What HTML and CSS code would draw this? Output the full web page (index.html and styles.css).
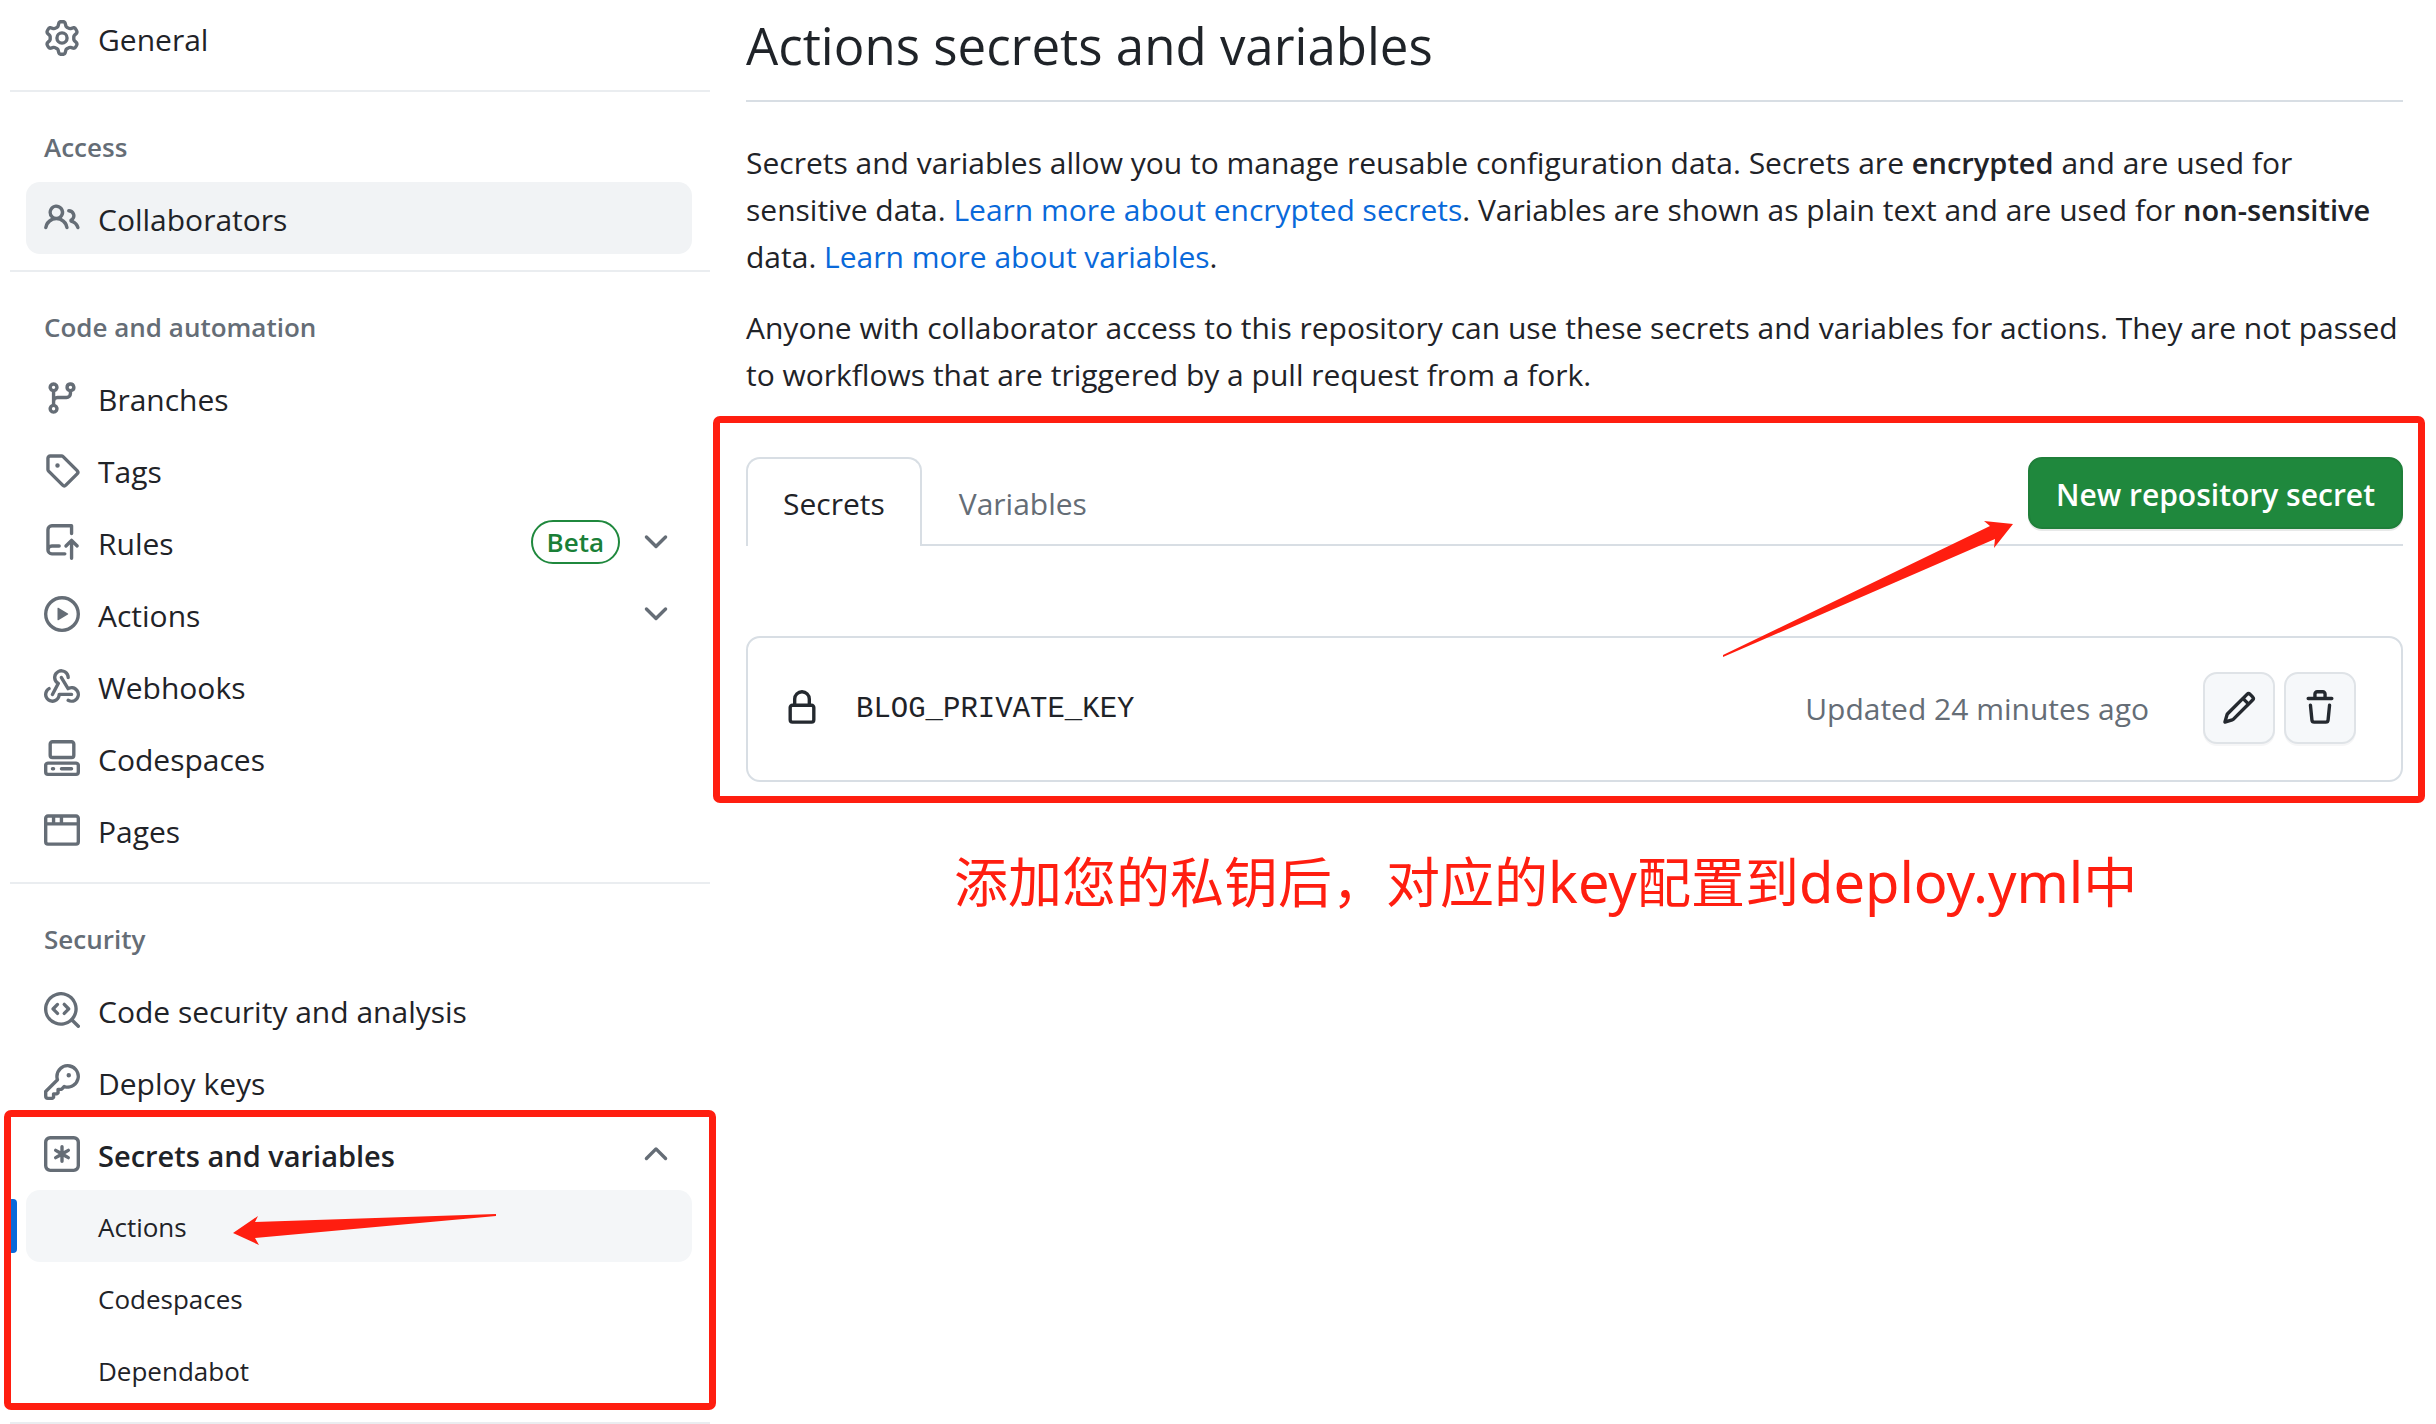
FILE: index.html
```html
<!DOCTYPE html>
<html lang="en">
<head>
  <meta charset="utf-8">
  <meta name="viewport" content="width=device-width, initial-scale=1">
  <title>Actions secrets and variables</title>
  <link rel="stylesheet" href="styles.css">
</head>
<body>
  <div class="layout">
    <nav class="sidebar" aria-label="Repository settings">
      <ul class="nav-group">
        <li><a class="nav-item" href="#general">
          <svg class="icon" viewBox="0 0 16 16" aria-hidden="true"><path d="M8 0a8.2 8.2 0 0 1 .701.031C9.444.095 9.99.645 10.16 1.29l.288 1.107c.018.066.079.158.212.224.231.114.454.243.668.386.123.082.233.09.299.071l1.103-.303c.644-.176 1.392.021 1.82.63.27.385.506.792.704 1.218.315.675.111 1.422-.364 1.891l-.814.806c-.049.048-.098.147-.088.294.016.257.016.515 0 .772-.01.147.038.246.088.294l.814.806c.475.469.679 1.216.364 1.891a7.977 7.977 0 0 1-.704 1.217c-.428.61-1.176.807-1.82.63l-1.102-.302c-.067-.019-.177-.011-.3.071a5.909 5.909 0 0 1-.668.386c-.133.066-.194.158-.211.224l-.29 1.106c-.168.646-.715 1.196-1.458 1.26a8.006 8.006 0 0 1-1.402 0c-.743-.064-1.289-.614-1.458-1.26l-.289-1.106c-.018-.066-.079-.158-.212-.224a5.738 5.738 0 0 1-.668-.386c-.123-.082-.233-.09-.299-.071l-1.103.303c-.644.176-1.392-.021-1.82-.63a8.12 8.12 0 0 1-.704-1.218c-.315-.675-.111-1.422.363-1.891l.815-.806c.05-.048.098-.147.088-.294a6.214 6.214 0 0 1 0-.772c.01-.147-.038-.246-.088-.294l-.815-.806C.635 6.045.431 5.298.746 4.623a7.92 7.92 0 0 1 .704-1.217c.428-.61 1.176-.807 1.82-.63l1.102.302c.067.019.177.011.3-.071.214-.143.437-.272.668-.386.133-.066.194-.158.211-.224l.29-1.106C6.009.645 6.556.095 7.299.03 7.53.01 7.764 0 8 0Zm-.571 1.525c-.036.003-.108.036-.137.146l-.289 1.105c-.147.561-.549.967-.998 1.189-.173.086-.34.183-.5.29-.417.278-.97.423-1.529.27l-1.103-.303c-.109-.03-.175.016-.195.045-.22.312-.412.644-.573.99-.014.031-.021.11.059.19l.815.806c.411.406.562.957.53 1.456a4.709 4.709 0 0 0 0 .582c.032.499-.119 1.05-.53 1.456l-.815.806c-.081.08-.073.159-.059.19.162.346.353.677.573.989.02.03.085.076.195.046l1.102-.303c.56-.153 1.113-.008 1.53.27.161.107.328.204.501.29.447.222.85.629.997 1.189l.289 1.105c.029.109.101.143.137.146a6.6 6.6 0 0 0 1.142 0c.036-.003.108-.036.137-.146l.289-1.105c.147-.561.549-.967.998-1.189.173-.086.34-.183.5-.29.417-.278.97-.423 1.529-.27l1.103.303c.109.029.175-.016.195-.045.22-.313.411-.644.573-.99.014-.031.021-.11-.059-.19l-.815-.806c-.411-.406-.562-.957-.53-1.456a4.709 4.709 0 0 0 0-.582c-.032-.499.119-1.05.53-1.456l.815-.806c.081-.08.073-.159.059-.19a6.464 6.464 0 0 0-.573-.989c-.02-.03-.085-.076-.195-.046l-1.102.303c-.56.153-1.113.008-1.53-.27a4.44 4.44 0 0 0-.501-.29c-.447-.222-.85-.629-.997-1.189l-.289-1.105c-.029-.11-.101-.143-.137-.146a6.6 6.6 0 0 0-1.142 0ZM11 8a3 3 0 1 1-6 0 3 3 0 0 1 6 0ZM9.5 8a1.5 1.5 0 1 0-3.001.001A1.5 1.5 0 0 0 9.5 8Z"/></svg>
          <span class="nav-label">General</span></a></li>
      </ul>

      <h2 class="nav-title">Access</h2>
      <ul class="nav-group">
        <li><a class="nav-item nav-item-hover" href="#collaborators">
          <svg class="icon" viewBox="0 0 16 16" aria-hidden="true"><path d="M2 5.5a3.5 3.5 0 1 1 5.898 2.549 5.508 5.508 0 0 1 3.034 4.084.75.75 0 1 1-1.482.235 4 4 0 0 0-7.9 0 .75.75 0 0 1-1.482-.236A5.507 5.507 0 0 1 3.102 8.05 3.493 3.493 0 0 1 2 5.5ZM11 4a3.001 3.001 0 0 1 2.22 5.018 5.01 5.01 0 0 1 2.56 3.012.749.749 0 0 1-.885.954.752.752 0 0 1-.549-.514 3.507 3.507 0 0 0-2.522-2.372.75.75 0 0 1-.574-.73v-.352a.75.75 0 0 1 .416-.672A1.5 1.5 0 0 0 11 5.5.75.75 0 0 1 11 4Zm-5.5-.5a2 2 0 1 0-.001 3.999A2 2 0 0 0 5.5 3.5Z"/></svg>
          <span class="nav-label">Collaborators</span></a></li>
      </ul>

      <h2 class="nav-title">Code and automation</h2>
      <ul class="nav-group">
        <li><a class="nav-item" href="#branches">
          <svg class="icon" viewBox="0 0 16 16" aria-hidden="true"><path d="M9.5 3.25a2.25 2.25 0 1 1 3 2.122V6A2.5 2.5 0 0 1 10 8.5H6a1 1 0 0 0-1 1v1.128a2.251 2.251 0 1 1-1.5 0V5.372a2.25 2.25 0 1 1 1.5 0v1.836A2.493 2.493 0 0 1 6 7h4a1 1 0 0 0 1-1v-.628A2.25 2.25 0 0 1 9.5 3.25Zm-6 0a.75.75 0 1 0 1.5 0 .75.75 0 0 0-1.5 0Zm8.25-.75a.75.75 0 1 0 0 1.5.75.75 0 0 0 0-1.5ZM4.25 12a.75.75 0 1 0 0 1.5.75.75 0 0 0 0-1.5Z"/></svg>
          <span class="nav-label">Branches</span></a></li>
        <li><a class="nav-item" href="#tags">
          <svg class="icon" viewBox="0 0 16 16" aria-hidden="true"><path d="M1 7.775V2.75C1 1.784 1.784 1 2.75 1h5.025c.464 0 .91.184 1.238.513l6.25 6.25a1.75 1.75 0 0 1 0 2.474l-5.026 5.026a1.75 1.75 0 0 1-2.474 0l-6.25-6.25A1.752 1.752 0 0 1 1 7.775Zm1.5 0c0 .066.026.13.073.177l6.25 6.25a.25.25 0 0 0 .354 0l5.025-5.025a.25.25 0 0 0 0-.354l-6.25-6.25a.25.25 0 0 0-.177-.073H2.75a.25.25 0 0 0-.25.25ZM6 5a1 1 0 1 1 0 2 1 1 0 0 1 0-2Z"/></svg>
          <span class="nav-label">Tags</span></a></li>
        <li><button class="nav-item" type="button" aria-expanded="false">
          <svg class="icon" viewBox="0 0 16 16" aria-hidden="true"><path d="M1 2.5A2.5 2.5 0 0 1 3.5 0h8.75a.75.75 0 0 1 .75.75v3.5a.75.75 0 0 1-1.5 0V1.5h-8a1 1 0 0 0-1 1v6.708A2.493 2.493 0 0 1 3.5 9h3.25a.75.75 0 0 1 0 1.5H3.5a1 1 0 0 0 0 2h5.75a.75.75 0 0 1 0 1.5H3.5A2.5 2.5 0 0 1 1 11.5Zm13.23 7.79h-.001l-1.224-1.224v6.184a.75.75 0 0 1-1.5 0V9.066L10.28 10.29a.75.75 0 0 1-1.06-1.061l2.505-2.504a.75.75 0 0 1 1.06 0L15.29 9.23a.751.751 0 0 1-.018 1.042.751.751 0 0 1-1.042.018Z"/></svg>
          <span class="nav-label">Rules</span>
          <span class="badge">Beta</span>
          <svg class="icon" viewBox="0 0 16 16" aria-hidden="true"><path d="M12.78 5.22a.749.749 0 0 1 0 1.06l-4.25 4.25a.749.749 0 0 1-1.06 0L3.22 6.28a.749.749 0 1 1 1.06-1.06L8 8.939l3.72-3.719a.749.749 0 0 1 1.06 0Z"/></svg>
        </button></li>
        <li><button class="nav-item" type="button" aria-expanded="false">
          <svg class="icon" viewBox="0 0 16 16" aria-hidden="true"><path d="M8 0a8 8 0 1 1 0 16A8 8 0 0 1 8 0ZM1.5 8a6.5 6.5 0 1 0 13 0 6.5 6.5 0 0 0-13 0Zm4.879-2.773 4.264 2.559a.25.25 0 0 1 0 .428l-4.264 2.559A.25.25 0 0 1 6 10.559V5.442a.25.25 0 0 1 .379-.215Z"/></svg>
          <span class="nav-label">Actions</span>
          <svg class="icon" viewBox="0 0 16 16" aria-hidden="true"><path d="M12.78 5.22a.749.749 0 0 1 0 1.06l-4.25 4.25a.749.749 0 0 1-1.06 0L3.22 6.28a.749.749 0 1 1 1.06-1.06L8 8.939l3.72-3.719a.749.749 0 0 1 1.06 0Z"/></svg>
        </button></li>
        <li><a class="nav-item" href="#webhooks">
          <svg class="icon" viewBox="0 0 16 16" aria-hidden="true"><path d="M5.5 4.25a2.25 2.25 0 0 1 4.5 0 .75.75 0 0 0 1.5 0 3.75 3.75 0 1 0-6.14 2.889l-2.272 4.258a.75.75 0 0 0 1.324.706L7 7.25a.75.75 0 0 0-.309-1.015A2.25 2.25 0 0 1 5.5 4.25Z"/><path d="M7.364 3.607a.75.75 0 0 1 1.03.257l2.608 4.349a3.75 3.75 0 1 1-.628 6.785.75.75 0 0 1 .752-1.299 2.25 2.25 0 1 0-.033-3.88.75.75 0 0 1-1.03-.256L7.107 4.636a.75.75 0 0 1 .257-1.03Z"/><path d="M2.9 8.776A.75.75 0 0 1 2.625 9.8 2.25 2.25 0 1 0 6 11.75a.75.75 0 0 1 .75-.751h5.5a.75.75 0 0 1 0 1.5H7.425a3.751 3.751 0 1 1-5.55-3.998.75.75 0 0 1 1.024.274Z"/></svg>
          <span class="nav-label">Webhooks</span></a></li>
        <li><a class="nav-item" href="#codespaces">
          <svg class="icon" viewBox="0 0 16 16" aria-hidden="true"><path d="M0 11.25c0-.966.784-1.75 1.75-1.75h12.5c.966 0 1.75.784 1.75 1.75v3A1.75 1.75 0 0 1 14.25 16H1.75A1.75 1.75 0 0 1 0 14.25Zm2-9.5C2 .784 2.784 0 3.75 0h8.5C13.216 0 14 .784 14 1.75v5a1.75 1.75 0 0 1-1.75 1.75h-8.5A1.75 1.75 0 0 1 2 6.75Zm1.75-.25a.25.25 0 0 0-.25.25v5c0 .138.112.25.25.25h8.5a.25.25 0 0 0 .25-.25v-5a.25.25 0 0 0-.25-.25Zm-2 9.5a.25.25 0 0 0-.25.25v3c0 .138.112.25.25.25h12.5a.25.25 0 0 0 .25-.25v-3a.25.25 0 0 0-.25-.25Z"/><path d="M7 12.75a.75.75 0 0 1 .75-.75h4.5a.75.75 0 0 1 0 1.5h-4.5a.75.75 0 0 1-.75-.75Zm-4 0a.75.75 0 0 1 .75-.75h.5a.75.75 0 0 1 0 1.5h-.5a.75.75 0 0 1-.75-.75Z"/></svg>
          <span class="nav-label">Codespaces</span></a></li>
        <li><a class="nav-item" href="#pages">
          <svg class="icon" viewBox="0 0 16 16" aria-hidden="true"><path d="M0 2.75C0 1.784.784 1 1.75 1h12.5c.966 0 1.75.784 1.75 1.75v10.5A1.75 1.75 0 0 1 14.25 15H1.75A1.75 1.75 0 0 1 0 13.25ZM14.5 6h-13v7.25c0 .138.112.25.25.25h12.5a.25.25 0 0 0 .25-.25Zm-6-3.5v2h6V2.75a.25.25 0 0 0-.25-.25ZM5 2.5v2h2v-2Zm-3.25 0a.25.25 0 0 0-.25.25V4.5h2v-2Z"/></svg>
          <span class="nav-label">Pages</span></a></li>
      </ul>

      <h2 class="nav-title">Security</h2>
      <ul class="nav-group">
        <li><a class="nav-item" href="#code-security">
          <svg class="icon" viewBox="0 0 16 16" aria-hidden="true"><path d="M8.47 4.97a.75.75 0 0 0 0 1.06L9.94 7.5 8.47 8.97a.75.75 0 1 0 1.06 1.06l2-2a.75.75 0 0 0 0-1.06l-2-2a.75.75 0 0 0-1.06 0ZM6.53 6.03a.75.75 0 0 0-1.06-1.06l-2 2a.75.75 0 0 0 0 1.06l2 2a.75.75 0 1 0 1.06-1.06L5.06 7.5l1.47-1.47Z"/><path d="M12.246 13.307a7.501 7.501 0 1 1 1.06-1.06l2.474 2.473a.749.749 0 1 1-1.06 1.06l-2.474-2.473ZM1.5 7.5a6.002 6.002 0 0 0 3.608 5.504 6.002 6.002 0 0 0 6.486-1.117.748.748 0 0 1 .292-.293A6 6 0 1 0 1.5 7.5Z"/></svg>
          <span class="nav-label">Code security and analysis</span></a></li>
        <li><a class="nav-item" href="#deploy-keys">
          <svg class="icon" viewBox="0 0 16 16" aria-hidden="true"><path d="M10.5 0a5.499 5.499 0 1 1-1.288 10.848l-.932.932a.749.749 0 0 1-.53.22H7v.75a.749.749 0 0 1-.22.53l-.5.5a.749.749 0 0 1-.53.22H5v.75a.749.749 0 0 1-.22.53l-.5.5a.749.749 0 0 1-.53.22h-2A1.75 1.75 0 0 1 0 14.25v-2c0-.199.079-.389.22-.53l4.932-4.932A5.5 5.5 0 0 1 10.5 0Zm-4 5.5c-.001.431.069.86.205 1.269a.75.75 0 0 1-.181.768L1.5 12.56v1.69c0 .138.112.25.25.25h1.69l.06-.06v-1.19a.75.75 0 0 1 .75-.75h1.19l.06-.06v-1.19a.75.75 0 0 1 .75-.75h1.19l1.023-1.025a.75.75 0 0 1 .768-.18A4 4 0 1 0 6.5 5.5ZM11 6a1 1 0 1 1 0-2 1 1 0 0 1 0 2Z"/></svg>
          <span class="nav-label">Deploy keys</span></a></li>
        <li class="secrets-group">
          <button class="nav-item nav-item-open" type="button" aria-expanded="true">
            <svg class="icon" viewBox="0 0 16 16" aria-hidden="true"><path d="M0 2.75A2.75 2.75 0 0 1 2.75 0h10.5A2.75 2.75 0 0 1 16 2.75v10.5A2.75 2.75 0 0 1 13.25 16H2.75A2.75 2.75 0 0 1 0 13.25ZM2.75 1.5c-.69 0-1.25.56-1.25 1.25v10.5c0 .69.56 1.25 1.25 1.25h10.5c.69 0 1.25-.56 1.25-1.25V2.75c0-.69-.56-1.25-1.25-1.25Z"/><path d="M8 4a.75.75 0 0 1 .75.75V6.7l1.69-.975a.75.75 0 0 1 .75 1.3L9.5 8l1.69.976a.75.75 0 0 1-.75 1.298L8.75 9.3v1.951a.75.75 0 0 1-1.5 0V9.299l-1.69.976a.75.75 0 0 1-.75-1.3L6.5 8l-1.69-.975a.75.75 0 0 1 .75-1.3l1.69.976V4.75A.75.75 0 0 1 8 4Z"/></svg>
            <span class="nav-label">Secrets and variables</span>
            <svg class="icon" viewBox="0 0 16 16" aria-hidden="true"><path d="M3.22 10.53a.749.749 0 0 1 0-1.06l4.25-4.25a.749.749 0 0 1 1.06 0l4.25 4.25a.749.749 0 1 1-1.06 1.06L8 6.811 4.28 10.53a.749.749 0 0 1-1.06 0Z"/></svg>
          </button>
          <ul class="subnav">
            <li><a class="subnav-item subnav-item-current" href="#secrets-actions" aria-current="page">Actions</a></li>
            <li><a class="subnav-item" href="#secrets-codespaces">Codespaces</a></li>
            <li><a class="subnav-item" href="#secrets-dependabot">Dependabot</a></li>
          </ul>
          <div class="callout callout-nav"></div>
          <svg class="arrow arrow-nav" viewBox="0 0 264 32" aria-hidden="true"><path d="M0 19 25 2 22 8 263 0V2L22 24 26 31Z"/></svg>
        </li>
      </ul>
    </nav>

    <main class="content">
      <h1 class="page-title">Actions secrets and variables</h1>
      <div class="intro">
        <p>Secrets and variables allow you to manage reusable configuration data. Secrets are <strong>encrypted</strong> and are used for sensitive data. <a href="#encrypted-secrets">Learn more about encrypted secrets</a>. Variables are shown as plain text and are used for <strong>non-sensitive</strong> data. <a href="#variables-docs">Learn more about variables</a>.</p>
        <p>Anyone with collaborator access to this repository can use these secrets and variables for actions. They are not passed to workflows that are triggered by a pull request from a fork.</p>
      </div>

      <section class="secrets">
        <div class="tabs">
          <a class="tab tab-current" href="#secrets" aria-current="page">Secrets</a>
          <a class="tab" href="#variables">Variables</a>
          <button class="button-primary" type="button">New repository secret</button>
        </div>
        <div class="secret-row">
          <svg class="icon icon-dark" viewBox="0 0 16 16" aria-hidden="true"><path d="M4 4a4 4 0 0 1 8 0v2h.25c.966 0 1.75.784 1.75 1.75v5.5A1.75 1.75 0 0 1 12.25 15h-8.5A1.75 1.75 0 0 1 2 13.25v-5.5C2 6.784 2.784 6 3.75 6H4Zm8.25 3.5h-8.5a.25.25 0 0 0-.25.25v5.5c0 .138.112.25.25.25h8.5a.25.25 0 0 0 .25-.25v-5.5a.25.25 0 0 0-.25-.25ZM10.5 6V4a2.5 2.5 0 1 0-5 0v2Z"/></svg>
          <code class="secret-name">BLOG_PRIVATE_KEY</code>
          <span class="secret-date">Updated 24 minutes ago</span>
          <div class="secret-tools">
            <button class="button-icon" type="button" aria-label="Edit secret"><svg class="icon icon-dark" viewBox="0 0 16 16" aria-hidden="true"><path d="M11.013 1.427a1.75 1.75 0 0 1 2.474 0l1.086 1.086a1.75 1.75 0 0 1 0 2.474l-8.61 8.61c-.21.21-.47.364-.756.445l-3.251.93a.75.75 0 0 1-.927-.928l.929-3.25c.081-.286.235-.547.445-.758l8.61-8.61Zm.176 4.823L9.75 4.81l-6.286 6.287a.253.253 0 0 0-.064.108l-.558 1.953 1.953-.558a.253.253 0 0 0 .108-.064Zm1.238-3.763a.25.25 0 0 0-.354 0L10.811 3.75l1.439 1.44 1.263-1.263a.25.25 0 0 0 0-.354Z"/></svg></button>
            <button class="button-icon" type="button" aria-label="Delete secret"><svg class="icon icon-dark" viewBox="0 0 16 16" aria-hidden="true"><path d="M11 1.75V3h2.25a.75.75 0 0 1 0 1.5H2.75a.75.75 0 0 1 0-1.5H5V1.75C5 .784 5.784 0 6.75 0h2.5C10.216 0 11 .784 11 1.75ZM4.496 6.675l.66 6.6a.25.25 0 0 0 .249.225h5.19a.25.25 0 0 0 .249-.225l.66-6.6a.75.75 0 0 1 1.492.149l-.66 6.6A1.748 1.748 0 0 1 10.595 15h-5.19a1.75 1.75 0 0 1-1.741-1.575l-.66-6.6a.75.75 0 1 1 1.492-.15ZM6.5 1.75V3h3V1.75a.25.25 0 0 0-.25-.25h-2.5a.25.25 0 0 0-.25.25Z"/></svg></button>
          </div>
        </div>
        <div class="callout callout-main"></div>
        <svg class="arrow arrow-main" viewBox="0 0 290 136" aria-hidden="true"><path d="M290 3 261 0 267 5 0 134V136L272 18 271 27Z"/></svg>
      </section>

      <p class="note" lang="zh-CN">添加您的私钥后，对应的<span class="note-latin">key</span>配置到<span class="note-latin">deploy.yml</span>中</p>
    </main>
  </div>
</body>
</html>
```
FILE: styles.css
```css
:root {
  --text: #1f2328;
  --muted: #656d76;
  --line: #d8dee4;
  --line-soft: #eaedf0;
  --accent: #0969da;
  --green: #1f883d;
  --red: #ff1e10;
  --radius: 14px;
}

* {
  box-sizing: border-box;
}

body {
  margin: 0;
  background: #fff;
  color: var(--text);
  font: 30px/47px "Open Sans", "Noto Sans", sans-serif;
}

ul {
  margin: 0;
  padding: 0;
  list-style: none;
}

a {
  color: var(--accent);
  text-decoration: none;
}

button {
  font: inherit;
  cursor: pointer;
}

strong {
  font-size: 29px;
  font-weight: 600;
}

.layout {
  display: flex;
  align-items: flex-start;
}

.icon {
  flex: none;
  width: 36px;
  height: 36px;
  fill: var(--muted);
}

.icon-dark {
  fill: #24292f;
}

/* Sidebar */

.sidebar {
  flex: none;
  width: 710px;
  padding: 2px 0 0 10px;
}

.nav-group {
  padding: 0 18px 16px 16px;
  border-bottom: 2px solid var(--line-soft);
}

.nav-title {
  margin: 0;
  padding: 35px 34px 15px;
  color: var(--muted);
  font-size: 26px;
  font-weight: 600;
  line-height: 40px;
}

.nav-item {
  display: flex;
  align-items: center;
  gap: 18px;
  width: 100%;
  height: 72px;
  padding: 0 18px;
  border: 0;
  border-radius: var(--radius);
  background: none;
  color: var(--text);
  text-align: left;
}

.nav-item-hover {
  background: #f1f3f5;
}

.nav-item-open {
  font-size: 29px;
  font-weight: 600;
}

.nav-label {
  flex: 1;
  padding-top: 3px;
}

.badge {
  padding: 0 14px;
  border: 2px solid var(--green);
  border-radius: 22px;
  color: #1a7f37;
  font-size: 26px;
  font-weight: 600;
  line-height: 40px;
}

.secrets-group {
  position: relative;
}

.subnav-item {
  display: flex;
  align-items: center;
  height: 72px;
  padding: 2px 0 0 72px;
  border-radius: var(--radius);
  color: var(--text);
  font-size: 26px;
}

.subnav-item-current {
  position: relative;
  background: #f4f6f8;
}

.subnav-item-current::before {
  content: "";
  position: absolute;
  top: 9px;
  bottom: 9px;
  left: -18px;
  width: 9px;
  border-radius: 4px;
  background: var(--accent);
}

/* Content */

.content {
  flex: 1;
  min-width: 0;
  padding: 9px 33px 0 36px;
}

.page-title {
  margin: 0;
  padding-bottom: 19px;
  border-bottom: 2px solid var(--line);
  font-size: 51px;
  font-weight: 400;
  line-height: 72px;
}

.intro {
  padding-top: 37px;
}

.intro p {
  margin: 0 0 24px;
}

.secrets {
  position: relative;
  margin-top: 59px;
}

.tabs {
  display: flex;
  align-items: flex-start;
  height: 89px;
  border-bottom: 2px solid var(--line);
}

.tab {
  height: 89px;
  padding: 0 35px;
  border: 2px solid transparent;
  border-bottom: 0;
  border-radius: var(--radius) var(--radius) 0 0;
  color: var(--muted);
  line-height: 90px;
}

.tab-current {
  border-color: var(--line);
  background: #fff;
  color: var(--text);
}

.button-primary {
  height: 72px;
  margin-left: auto;
  padding: 2px 26px 0;
  border: 2px solid #1f7f3a;
  border-radius: var(--radius);
  background: var(--green);
  color: #fff;
  font-weight: 600;
  box-shadow: 0 2px 0 rgba(31, 35, 40, 0.1);
}

.secret-row {
  display: flex;
  align-items: center;
  margin-top: 90px;
  padding: 34px 45px 36px 36px;
  border: 2px solid var(--line);
  border-radius: var(--radius);
}

.secret-name {
  flex: 1;
  padding: 3px 0 0 36px;
  font: 29px/47px "Liberation Mono", monospace;
}

.secret-date {
  padding-right: 54px;
  color: var(--muted);
}

.secret-tools {
  display: flex;
  gap: 9px;
}

.button-icon {
  display: flex;
  align-items: center;
  justify-content: center;
  width: 72px;
  height: 72px;
  padding: 0;
  border: 2px solid #dfe3e7;
  border-radius: var(--radius);
  background: #f6f8fa;
  box-shadow: 0 2px 0 rgba(31, 35, 40, 0.04);
}

.note {
  margin: 54px 0 0;
  padding-left: 208px;
  color: var(--red);
  font: 54px/90px "Noto Sans", "Noto Sans CJK SC", sans-serif;
}

.note-latin {
  font-size: 56px;
}

/* Red markup drawn over the page */

.callout {
  position: absolute;
  border: 7px solid var(--red);
  border-radius: 7px;
  pointer-events: none;
}

.callout-nav {
  inset: -8px -24px -4px -22px;
}

.callout-main {
  inset: -41px -22px -21px -33px;
}

.arrow {
  position: absolute;
  fill: var(--red);
  pointer-events: none;
}

.arrow-nav {
  top: 96px;
  left: 207px;
  width: 264px;
  height: 32px;
}

.arrow-main {
  top: 64px;
  right: 390px;
  width: 290px;
  height: 136px;
}
```
